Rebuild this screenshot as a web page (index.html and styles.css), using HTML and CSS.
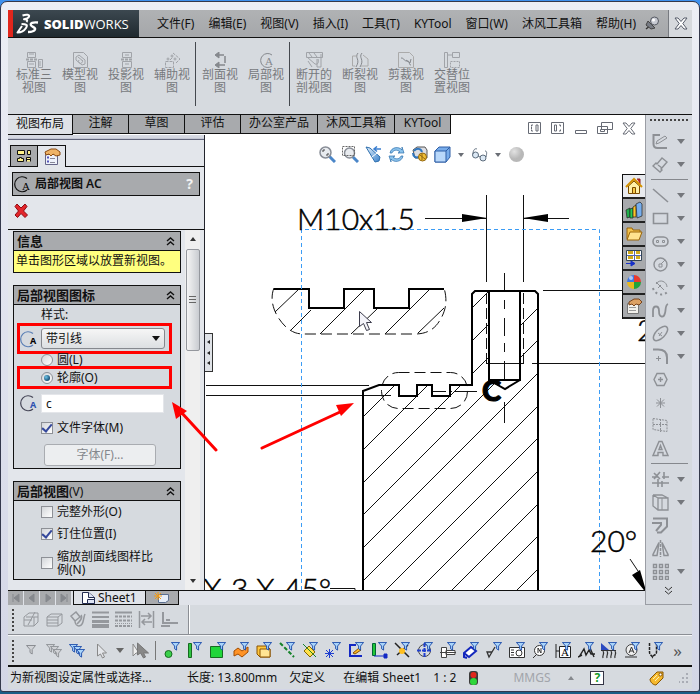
FILE: index.html
```html
<!DOCTYPE html>
<html lang="zh-CN">
<head>
<meta charset="utf-8">
<title>SOLIDWORKS</title>
<link rel="stylesheet" href="styles.css">
</head>
<body>
<svg class="defs" aria-hidden="true">
  <defs>
    <symbol id="funnel" viewBox="0 0 10 10"><path d="M.5.5h9L6.200 4.500V9L4 7.500V4.500z"/></symbol>
    <symbol id="chev" viewBox="0 0 9 9"><path d="M1 4l3.500-3L8 4M1 8l3.500-3L8 8" fill="none" stroke="#111" stroke-width="1.400"/></symbol>
    <symbol id="detail" viewBox="0 0 18 18"><path d="M13 3.500A7.500 7.500 0 1 0 13 15" fill="none" stroke="currentColor" stroke-width="1.200"/></symbol>
    <linearGradient id="steel" x1="0" y1="0" x2="1" y2="1"><stop offset="0" stop-color="#e6f2fc"/><stop offset="1" stop-color="#3b82cc"/></linearGradient>
    <radialGradient id="ball" cx=".35" cy=".3"><stop offset="0" stop-color="#e2e2e2"/><stop offset="1" stop-color="#b8b8b8"/></radialGradient>
  </defs>
</svg>

<div class="window">
  <header class="menubar">
    <div class="brand">
      <svg width="24" height="22" viewBox="0 0 24 22" fill="none" stroke="#fff" stroke-linejoin="round"><path d="M6.500 2.500c4-1.500 7.500-1 6.500 1.200-.6 1.500-3 2.300-5 2.500 3 0 4 1 2.500 2.800" stroke-width="2"/><path d="M5.500 11c5 0 6.500 1 4.500 4-1.600 2.500-5 4.500-8.500 4.500L6 13" stroke-width="2"/><path d="M22 9.500c-5.500-.5-8 .5-7 2.800.8 1.600 5 2 4 4.200-1 2-4 2.500-7 2.500" stroke-width="2.400"/></svg>
      <span class="brand-name"><b>SOLID</b>WORKS</span>
    </div>
    <nav class="menus">
      <button>文件(F)</button><button>编辑(E)</button><button>视图(V)</button><button>插入(I)</button><button>工具(T)</button><button>KYTool</button><button>窗口(W)</button><button>沐风工具箱</button><button>帮助(H)</button>
    </nav>
    <button class="pin" aria-label="固定菜单"><svg width="15" height="15" viewBox="0 0 15 15"><path d="M1 13l5-4" stroke="#333" stroke-width="1.500"/><path d="M3 5l7 7-4 1-5-4z" fill="#777b84" stroke="#444"/><circle cx="9.500" cy="5" r="4" fill="#c7cad2" stroke="#555962"/><circle cx="8.500" cy="4" r="1.500" fill="#fff"/></svg></button>
    <button class="close" aria-label="关闭"><svg width="14" height="13" viewBox="0 0 14 13"><path d="M1 1h3l3 3.500L10 1h3L8.800 6.500 13 12h-3L7 8.500 4 12H1l4.200-5.500z" fill="#fff" stroke="#555b68"/></svg></button>
  </header>

  <div class="ribbon">
    <button><svg class="ri" viewBox="0 0 17 16"><path d="M1.500.5h8v5h-8zM1.500 9.500h8v6h-8zM12.500 7.500h4v8h-4zM3 2h5M3 12h5M14 9v5"/><path d="M0 7.500h12" stroke-dasharray="3 1" stroke-width="2"/></svg><span>标准三<br>视图</span></button>
    <button><svg class="ri" viewBox="0 0 17 16"><path d="M1.500.5h10l4 4v11h-14z"/><path d="M4 5l3-2 6 5v4l-3 1-6-5zM6 5l5 4M7 8a2 2 0 1 0 3 0" /></svg><span>模型视<br>图</span></button>
    <button><svg class="ri" viewBox="0 0 17 16"><path d="M4.500.5h9v5h-9zM4.500 9.500h9v6h-9zM7 3h4M7 12h4"/><path d="M3 7.500h12" stroke-dasharray="3 1" stroke-width="2"/></svg><span>投影视<br>图</span></button>
    <button><svg class="ri" viewBox="0 0 17 16"><path d="M1.500 9.500h8v6h-8zM9 1l7 6-4 4M6 8l3-3" stroke-dasharray="3 1"/><circle cx="4" cy="7" r="1"/><circle cx="8" cy="4" r="1"/><circle cx="11" cy="7" r="1"/></svg><span>辅助视<br>图</span></button>
    <i></i>
    <button><svg class="ri dark" viewBox="0 0 17 16"><path d="M5 3h8v10H5" stroke-dasharray="7 2" stroke-width="1.500"/><path d="M7 0L3 3l4 3zM7 10l-4 3 4 3z" fill="#85888d"/></svg><span>剖面视<br>图</span></button>
    <button><svg class="ri dark" viewBox="0 0 17 16"><path d="M14 3A7 7 0 1 0 14 14"/><text x="7" y="13">A</text></svg><span>局部视<br>图</span></button>
    <i></i>
    <button><svg class="ri" viewBox="0 0 17 16"><path d="M.5.5h16v5H.5zM2 9l4 6M11 7v8h4V2M1 5l8 7c3 1 4-2 3-5M3 1l3 4M8 1l3 4"/></svg><span>断开的<br>剖视图</span></button>
    <button><svg class="ri dark" viewBox="0 0 17 16"><path d="M6 1c-4 5 3 6-2 14M10 1c-4 5 3 6-2 14"/><path d="M5 4H.5v10H3M11 3l5 4v7H9" stroke="#aaa"/></svg><span>断裂视<br>图</span></button>
    <button><svg class="ri" viewBox="0 0 17 16"><path d="M.5.5h11l4 4v11H.5z" stroke="#aaa"/><path d="M3 6c4 0 2 3 6 3s1 4 4 4M8 8l4 3 1-4" stroke="#85888d"/></svg><span>剪裁视<br>图</span></button>
    <button><svg class="ri" viewBox="0 0 17 16"><path d="M.5.5h3v15h-3zM8.500.5h7v5h-7zM3 3h5"/><path d="M6.500 9.500h9v6h-9z" stroke-dasharray="2 1"/></svg><span>交替位<br>置视图</span></button>
  </div>

  <main class="main">
    <section class="workspace">
      <div class="tabrow">
        <button class="tab active">视图布局</button><button class="tab">注解</button><button class="tab">草图</button><button class="tab">评估</button><button class="tab">办公室产品</button><button class="tab">沐风工具箱</button><button class="tab">KYTool</button>
        <div class="docctl">
          <svg viewBox="0 0 14 13"><path d="M.5.5h12v11H.5zM5 3H3.500v1.500M5 9H3.500V7.500M3.500 5v2M8 3h2v6H8z"/></svg>
          <svg viewBox="0 0 14 13"><path d="M.5.5h12v11H.5zM8 3h1.500v1.500M8 9h1.500V7.500M3.500 3h2v6h-2z"/></svg>
          <svg viewBox="0 0 14 13"><path d="M1.500 8.500h11v3h-11z"/></svg>
          <svg class="wide" viewBox="0 0 16 13"><path d="M4.500.5h11v7h-11zM.5 4.500h10v7H.5zM3.500 7.500h4v2h-4z"/></svg>
          <svg viewBox="0 0 14 13"><path d="M1 1h3l3 3.500L10 1h3L8.800 6.500 13 12h-3L7 8.500 4 12H1l4.200-5.500z"/></svg>
        </div>
      </div>

      <div class="split">
        <aside class="panel">
          <div class="grip"></div>
          <div class="ptabs">
            <button aria-label="特征树"><svg width="16" height="14" viewBox="0 0 16 14"><path d="M1.500 1.500h7v4h-7zM11.500 1.500h3v4h-3zM1.500 12.500V9.500h2v-1h2v1h2v3zM10.500 12.500v-4h4v4M10.500 10.500h4" fill="#fff28a" stroke="#111"/></svg></button>
            <button class="active" aria-label="属性"><svg width="18" height="18" viewBox="0 0 18 18"><path d="M2.500 6.500h12v10h-12z" fill="#eef2fb" stroke="#668"/><path d="M4 9.500h2M4 13.500h2" stroke="#55b" stroke-width="2"/><path d="M7 10.500h5M7 14.500h5" stroke="#889"/><path d="M2 4l6-3h5l4 3v3l-4 1-3-2-2 2-2-2-3 1z" fill="#efb366" stroke="#8a4b12"/></svg></button>
            <span></span>
          </div>
          <div class="ptitle"><svg width="18" height="18" viewBox="0 0 18 18"><use href="#detail"/><text x="8" y="15" class="serif">A</text></svg><h1>局部视图 AC</h1><b>?</b></div>
          <div class="actions"><button aria-label="取消"><svg width="14" height="15" viewBox="0 0 14 15"><path d="M3 1l4 4 4-4 2 2.500L9.500 8l4 4-2.500 2.500-4-4-3.500 4L1 12l3.500-4L1 3.500z" fill="#e3262b" stroke="#8e0a12"/></svg></button></div>
          <div class="pscroll">
            <form class="groups">
              <section class="group">
                <h2>信息<svg width="9" height="9"><use href="#chev"/></svg></h2>
                <p class="tip">单击图形区域以放置新视图。</p>
              </section>
              <section class="group">
                <h2>局部视图图标<svg width="9" height="9"><use href="#chev"/></svg></h2>
                <div class="gbody">
                  <label class="lab" for="style">样式:</label>
                  <div class="mark tall"><svg class="det" viewBox="0 0 18 18"><g class="blue"><use href="#detail"/></g><text x="10" y="14">A</text></svg><span class="pick"><select id="style"><option>带引线</option><option>无引线</option></select></span></div>
                  <label class="opt tight"><input type="radio" name="shape">圆(L)</label>
                  <div class="mark"><label class="opt"><input type="radio" name="shape" checked>轮廓(O)</label></div>
                  <div class="namerow"><svg class="det" viewBox="0 0 18 18"><use href="#detail"/><text x="10" y="14" fill="#2e52b0">A</text></svg><input type="text" value="c" aria-label="标号"></div>
                  <label class="opt"><input type="checkbox" checked>文件字体(M)</label>
                  <button type="button" class="font" disabled>字体(F)...</button>
                </div>
              </section>
              <section class="group">
                <h2><span>局部视图<em>(V)</em></span><svg width="9" height="9"><use href="#chev"/></svg></h2>
                <div class="gbody checks">
                  <label class="opt"><input type="checkbox">完整外形(O)</label>
                  <label class="opt"><input type="checkbox" checked>钉住位置(I)</label>
                  <label class="opt multi"><input type="checkbox"><span>缩放剖面线图样比例(N)</span></label>
                </div>
              </section>
            </form>
            <div class="vbar"><i class="up"></i><div class="thumb"><span></span></div><i class="down"></i></div>
          </div>
        </aside>

        <section class="canvas">
          <svg class="drawing" viewBox="205 135 440 455" preserveAspectRatio="xMidYMin slice">
            <defs>
              <clipPath id="solid"><path d="M363 391l16-6h20v11h18v-11h15v11h18v-11h22v-91l3-3h14v89l16 9 15-9v-89h15l3 3v297H363z"/></clipPath>
            </defs>
            <g class="thin">
              <path d="M486.500 195v87M523.500 195v87M425 218.500h62M523 218.500h46M543 290.500h102M532 363.500h113M206 385.500h163M206 395.500h185M330 588.500h25v2M630 559l8 12"/>
              <path d="M504.500 273v17m0 10v9m0 9v18m0 7v9m0 9v18m0 23v21M432 391.500h14m3 0h3m3 0h22"/>
              <path d="M486.500 293v70M523.500 293v70" stroke-dasharray="11 4"/>
              <path d="M486 363.500h38"/>
              <rect x="381.500" y="372.500" width="86" height="36" rx="17" stroke-dasharray="11 5"/>
              <path d="M274 288c-5 12 0 28 13 40 8 6 12 6 20 6h108c12 0 20-5 25-14 7-11 7-22 4-32" stroke-dasharray="11 5"/>
              <path d="M299 289l-24 23M311 310l-20 20M365 289l-45 45M377 309l-26 25M430 289l-45 45M444 308l-26 25"/>
              <g clip-path="url(#solid)"><path d="M330 450L560 220M330 483L560 253M330 516L560 286M330 548L560 318M330 581L560 351M330 614L560 384M330 646L560 416M330 679L560 449M330 712L560 482M330 744L560 514M330 777L560 547"/></g>
            </g>
            <g class="thick">
              <path d="M274 289h35v19h35v-19h30v19h35v-19h35"/>
              <path d="M363 590V391l16-6h20v11h18v-11h15v11h18v-11h22v-91l3-3h60l3 3v296"/>
              <path d="M489 291v89h31v-89M489 380l16 9 15-9"/>
            </g>
            <path d="M487 218l-25-4v8zM523 218l25-4v8zM647 594l-15-19 8-5z"/>
            <path class="sheet" d="M301.500 590V229.500h298V590"/>
            <g class="dim">
              <text x="297" y="230">M10x1.5</text><text x="590" y="552">20°</text><text x="637" y="341">2</text>
              <text x="203" y="600">X</text><text x="231" y="600">3</text><text x="256" y="600">X</text><text x="284" y="600">45°</text>
              <text x="482" y="401" class="heavy">C</text>
            </g>
            <path d="M359.500 311.500v15l4-3 3 7 3-1-3-7h5z" fill="#f4f4fa" stroke="#3c3c4c"/>
          </svg>

          <div class="viewbar">
            <svg viewBox="0 0 17 17"><path d="M10 10l6 6" stroke="#4a86c8" stroke-width="3"/><circle cx="6.500" cy="6.500" r="5.500" fill="#e8ebef" stroke="#888d96" stroke-width="1.500"/><path d="M4 6V4h2M9 7v2H7" fill="none" stroke="#444"/></svg>
            <svg viewBox="0 0 17 17"><path d="M10 10l6 6" stroke="#4a86c8" stroke-width="3"/><circle cx="7.500" cy="7" r="5" fill="#e8ebef" stroke="#888d96" stroke-width="1.500"/><path d="M.5.500h12v9H.5z" fill="none" stroke="#666" stroke-dasharray="2 1"/></svg>
            <svg viewBox="0 0 17 17"><path d="M1 1l4 1 10 9-1 4-4 1z" fill="url(#steel)" stroke="#2e6fae"/><path d="M16 3H9m3-2.500L9 3l3 2.500" fill="none" stroke="#3b7fd0" stroke-width="1.500"/><path d="M7 11l5-4" stroke="#fff"/></svg>
            <svg viewBox="0 0 17 17"><path d="M2 7c1-6 9-7 12-3V1l2 6h-6l2-1C9 3 5 4 4 7zM15 10c-1 6-9 7-12 3v3l-2-6h6l-2 1c3 3 7 2 8-1z" fill="#8cc3ec" stroke="#2e70ad" stroke-width=".7"/></svg>
            <svg viewBox="0 0 17 17"><path d="M2 4l4-3h8l2 3v8H4z" fill="#dcdde2" stroke="#555"/><path d="M3 5c2-3 7-3 8 1M2 7c0 4 3 5 6 4" fill="none" stroke="#2f75bd" stroke-width="2"/><circle cx="11.500" cy="11" r="4" fill="#f0bf35" stroke="#936710"/><path d="M9 9l5 4M11 7v7" stroke="#936710"/></svg>
            <svg viewBox="0 0 17 17"><path d="M1 5l4-4h11v10l-4 5H1z" fill="#78acea" stroke="#2f5ea6"/><path d="M1 5h11v11H1z" fill="#b9d8fa" stroke="#2f5ea6"/><path d="M12 5l4-4" stroke="#2f5ea6"/></svg>
            <i class="caret"></i>
            <svg viewBox="0 0 17 17" fill="#dbe8f4" stroke="#5d6c7c"><circle cx="4.500" cy="9" r="3"/><circle cx="12" cy="12" r="3"/><path d="M2 8c0-4 2-6 4-5M15 11c1-4 1-6-1-6M7 10l2 1" fill="none"/></svg>
            <i class="caret"></i>
            <svg viewBox="0 0 17 17"><circle cx="8.500" cy="8.500" r="7.500" fill="url(#ball)"/></svg>
          </div>
          <button class="collapse" aria-label="折叠面板"><i></i><i></i><i></i></button>
          <div class="tasks">
            <button class="active" aria-label="资源"><svg viewBox="0 0 18 18"><path d="M12 2h3v5" fill="#c22" stroke="#822"/><path d="M3.500 9v7.500h11V9L9 4z" fill="#fff1a8" stroke="#7a4a00"/><path d="M1 10l8-8 8 8" fill="none" stroke="#d39100" stroke-width="2"/><path d="M7.500 10.500h3v6h-3z" fill="#f7c948" stroke="#7a4a00"/></svg></button>
            <button aria-label="设计库"><svg viewBox="0 0 18 18" stroke="#222" stroke-width=".7"><path d="M1 9l4-2v9l-3 1z" fill="#21b04b"/><path d="M5 8l3-1v10H5z" fill="#26c954"/><path d="M8 6l3-2v12H8z" fill="#ffc426"/><path d="M11 3l4-2 2 2v12l-5 2z" fill="#77aeed"/></svg></button>
            <button aria-label="文件探索器"><svg viewBox="0 0 18 18"><path d="M2 14V3h5l1 2h7v3" fill="#f3c14b" stroke="#9a6508"/><path d="M2 15l3-8h12l-3 8z" fill="#ffe28e" stroke="#9a6508"/></svg></button>
            <button aria-label="视图调色板"><svg viewBox="0 0 18 18"><path d="M1.500 1.500h15v10h-15z" fill="#fff" stroke="#345"/><path d="M3 3.500h5M11 3.500h4M3 8.500h5M11 8.500h4" stroke="#cfaa18" stroke-width="3"/><path d="M9.500 2v9M2 6.500h14" stroke="#56a"/><path d="M1 14.500h6M6 12l4 2.500L6 17z" fill="#1730c8" stroke="#1730c8"/></svg></button>
            <button aria-label="外观"><svg viewBox="0 0 18 18"><path d="M9 9V2a7 7 0 0 0-7 7z" fill="#3f78e5"/><path d="M9 9h7a7 7 0 0 0-7-7z" fill="#e83b2e"/><path d="M9 9H2a7 7 0 0 0 7 7z" fill="#eab91d"/><path d="M9 9v7a7 7 0 0 0 7-7z" fill="#23a33c"/><circle cx="6" cy="5" r="2" fill="#fff" opacity=".6"/></svg></button>
            <button aria-label="自定义属性"><svg viewBox="0 0 18 18"><path d="M2.500 6.500h11v10h-11z" fill="#f2f0eb" stroke="#777"/><path d="M4 10.500h7M4 13.500h7" stroke="#999"/><path d="M4 5l5-3h5l3 3-3 3-3-1-2 2-2-2-3 1z" fill="#dda163" stroke="#79451d"/></svg></button>
          </div>
        </section>
      </div>

      <div class="sheets">
        <button class="nav" aria-label="首页"><svg viewBox="0 0 10 10"><path d="M2 1v8M8 1v8L3 5z"/></svg></button><button class="nav" aria-label="上一页"><svg viewBox="0 0 10 10"><path d="M7 1v8L2 5z"/></svg></button><button class="nav" aria-label="下一页"><svg viewBox="0 0 10 10"><path d="M3 1v8l5-4z"/></svg></button><button class="nav" aria-label="末页"><svg viewBox="0 0 10 10"><path d="M8 1v8M2 1v8l5-4z"/></svg></button>
        <button class="sheet-tab"><svg width="14" height="12" viewBox="0 0 14 12"><path d="M.5 11.500V.5h6l6 5v6z" fill="#fff" stroke="#222b50"/><path d="M5.500 7.500h7v4h-7zM6.500.5v5h6" fill="#dfe5f5" stroke="#222b50"/></svg>Sheet1</button>
        <button class="new-tab" aria-label="新建图纸"><svg width="16" height="12" viewBox="0 0 16 12"><path d="M4.500 2.500h10v6l-3 2h-7z" fill="#e6eef9" stroke="#5b6f90"/><path d="M4 0v8M0 4h8M1 1l6 6M7 1L1 7" stroke="#f39a12"/></svg></button>
      </div>
    </section>

    <aside class="tools">
      <div class="dots"></div>
      <button class="more"><svg viewBox="0 0 17 17"><path d="M8 2H1.500v9c0 3 1 4 4 4H15" stroke-width="2"/><path d="M5 8l8-5 2 2-8 5-3 1z"/></svg></button>
      <button class="more"><svg viewBox="0 0 17 17"><path d="M1 10l3-3 1 1 5-6 5 4-6 7 1 1-2 2zM6 9l4 3" stroke-width="1.400"/></svg></button>
      <hr>
      <button class="more"><svg viewBox="0 0 17 17"><path d="M1 2l15 13" stroke-width="1.600"/></svg></button>
      <button class="more"><svg viewBox="0 0 17 17"><path d="M1.500 3.500h14v10h-14z" stroke-width="1.600"/></svg></button>
      <button class="more"><svg viewBox="0 0 17 17"><rect x="1" y="4" width="15" height="9" rx="4.500" stroke-width="1.600"/><path d="M4.500 7.500h2v2h-2zM10.500 7.500h2v2h-2z"/></svg></button>
      <button class="more"><svg viewBox="0 0 17 17"><circle cx="8.500" cy="8.500" r="6.500" stroke-width="1.400"/><path d="M7 8h3v3H7zM9 8l4-4"/></svg></button>
      <button class="more"><svg viewBox="0 0 17 17"><path d="M4 5c4-6 11-2 11 3M4 3l8 8M9 6L6 9"/><path d="M1 9c2 8 12 8 15 3" stroke-dasharray="2 3" stroke-width="2"/></svg></button>
      <button class="more"><svg viewBox="0 0 17 17"><path d="M1 15V9c0-6 6-6 6 0 0 7 5 7 6 2 1-3 0-8 3-9" stroke-width="1.800"/></svg></button>
      <button class="more"><svg viewBox="0 0 17 17"><ellipse cx="8.500" cy="8.500" rx="9" ry="4.500" transform="rotate(-45 8.500 8.500)" stroke-width="1.500"/><path d="M6 8l4 3M10 7l-3 4"/></svg></button>
      <button class="more"><svg viewBox="0 0 17 17"><path d="M1 1.500h5c7 0 9 4 9 8V16" stroke-width="2"/><path d="M4 10.500h5M6.500 8v5"/></svg></button>
      <button><svg viewBox="0 0 17 17"><path d="M5 2.500h7l3 6-3 6H5l-3-6zM6 8.500h5M8.500 6v5" stroke-width="1.400"/></svg></button>
      <button><svg viewBox="0 0 17 17"><path d="M8.500 4v10M4 9h9M5 5.500l7 7M12 5.500l-7 7"/></svg></button>
      <button><svg viewBox="0 0 17 17"><path d="M1 1.500l14 2v11l-14-2zM1 7.500h15M8.500 2v13" stroke-dasharray="2 1"/></svg></button>
      <button><svg viewBox="0 0 17 17"><path d="M1 15.500h5v-3h5v3h5L10 1.500H7zM7 9.500h3L8.500 5.500z" stroke-width="1.400"/></svg></button>
      <hr>
      <button class="more"><svg viewBox="0 0 17 17"><path d="M0 6h6m4 0h7M0 12h17M12 1v7M10 10v6M6 8v8M2 2l6 6M8 1L2 8" stroke-width="1.600"/></svg></button>
      <button class="more"><svg viewBox="0 0 17 17"><path d="M1 1h9l6 3M1 1v11l5 4h10V4H6v12M1 1l5 3" stroke-width="1.300"/><path d="M10 4v12"/></svg></button>
      <button><svg viewBox="0 0 17 17"><path d="M0 6h9v2l-5 6M1 1.500h14v8l-6 6H5" stroke-width="2"/></svg></button>
      <button><svg viewBox="0 0 17 17"><path d="M1 15.500h4l2-13-6 12zM16 15.500h-4l-2-13 6 12z" stroke-width="1.500"/><path d="M8.500 0v17" stroke-dasharray="3 1" stroke-width="1.500"/></svg></button>
      <button class="more"><svg viewBox="0 0 17 17"><path d="M1.500 1.500h3v3h-3zM7.500 1.500h3v3h-3zM13.500 1.500h3v3h-3zM1.500 7.500h3v3h-3zM7.500 7.500h3v3h-3zM13.500 7.500h3v3h-3zM1.500 13.500h3v3h-3zM7.500 13.500h3v3h-3zM13.500 13.500h3v3h-3z" stroke-width="1.400"/></svg></button>
      <button class="expand"><svg viewBox="0 0 9 9"><path d="M1 1l3.500 3L8 1M1 5l3.500 3L8 5" stroke="#333"/></svg></button>
    </aside>
  </main>

  <div class="bar lines">
    <div class="vdots"></div>
    <svg viewBox="0 0 17 17"><path d="M1 6l5-4h9v9l-4 4H1zM5 14L12 1M1 9h8M3 6h12M11 6v9"/></svg>
    <svg viewBox="0 0 17 17"><path d="M1 6l4-3h11v9l-4 3H1zM1 6h11v9M12 6l4-3M1 9h11M1 12h11"/></svg>
    <svg viewBox="0 0 17 17"><path d="M2 5l5-4 4 5-5 4-4-5zM6 10c0 3 2 5 4 5 5 0 4-8 6-12M12 4c2 3-1 6-4 9" stroke-width="1.500"/></svg>
    <svg viewBox="0 0 17 17"><path d="M0 1.500h17M0 6h17" stroke-width="2"/><path d="M0 10.500h17" stroke-width="3"/><path d="M0 15h17" stroke-width="4"/></svg>
    <svg viewBox="0 0 17 17"><path d="M0 1.500h17" stroke-width="2"/><path d="M0 5.500h17M0 9.500h17M0 15h17" stroke-width="2" stroke-dasharray="3 1"/><path d="M0 12.500h17" stroke-dasharray="1 1"/></svg>
    <svg viewBox="0 0 17 17"><path d="M1.500 0v17M15.500 0v17M3 5h10M10 2l3 3-3 3M14 11H4M7 8l-3 3 3 3" stroke-width="1.500"/></svg>
    <svg viewBox="0 0 17 17"><path d="M2 1v11h15M0 15h9M5 9h4" stroke-width="2"/></svg>
    <div class="sep"></div>
  </div>

  <div class="bar filters">
    <div class="vdots"></div>
    <svg viewBox="0 0 17 17"><use href="#funnel" x="3" y="3" width="10" height="10" class="fg"/></svg>
    <svg viewBox="0 0 17 17" class="fg"><use href="#funnel" x="0" y="2" width="9" height="9"/><use href="#funnel" x="4" y="4" width="9" height="9"/><use href="#funnel" x="7" y="7" width="9" height="9"/></svg>
    <svg viewBox="0 0 17 17" class="fb"><use href="#funnel" x="0" y="2" width="9" height="9"/><use href="#funnel" x="4" y="4" width="9" height="9"/><use href="#funnel" x="7" y="7" width="9" height="9"/></svg>
    <svg viewBox="0 0 17 17"><path d="M5.500 2v12l3-2 2 4 2-1-2-4h4z" fill="#e4e6ea" stroke="#888"/></svg>
    <i class="caret"></i>
    <svg viewBox="0 0 17 17"><path d="M1 2v12l3-3h3z" fill="#eee" stroke="#888"/><path d="M5.500 1v12l3-2 3 5 2-1-2-4h5z" fill="#888" stroke="#777"/></svg>
    <div class="rule"></div>
    <svg viewBox="0 0 17 17"><circle cx="4.500" cy="12" r="3.500" fill="#3ad04a" stroke="#166b20"/><use href="#funnel" x="7" width="9" height="9" class="fb"/></svg>
    <svg viewBox="0 0 17 17"><path d="M1.500 1.500h3v14h-3z" fill="#2fc442" stroke="#166b20"/><use href="#funnel" x="6" width="9" height="9" class="fb"/></svg>
    <svg viewBox="0 0 17 17"><path d="M.5 4.500h12v11H.5z" fill="#20d63a" stroke="#166b20"/><use href="#funnel" x="7" width="9" height="9" class="fb"/></svg>
    <svg viewBox="0 0 17 17"><path d="M1 9l4-3 4 3 6-4v5l-6 5-4-3-4 2z" fill="#ff9326" stroke="#a34d00"/><use href="#funnel" x="7" width="9" height="9" class="fb"/></svg>
    <svg viewBox="0 0 17 17"><path d="M1 4h10l3 3v8H4l-3-3z" fill="#ffc73c" stroke="#8a5300"/><path d="M4 7h10v8H4z" fill="#ffe493" stroke="#8a5300"/><use href="#funnel" x="7" width="9" height="9" class="fb"/></svg>
    <svg viewBox="0 0 17 17"><path d="M1 1l14 14" stroke="#16832a" stroke-width="2" stroke-dasharray="4 2"/><use href="#funnel" x="7" width="9" height="9" class="fb"/></svg>
    <svg viewBox="0 0 17 17"><path d="M2 9l5-5 6 6-5 5z" fill="#ffe14a" stroke="#846600"/><path d="M1 2l13 13" stroke="#16832a"/><use href="#funnel" x="7" width="9" height="9" class="fb"/></svg>
    <svg viewBox="0 0 17 17"><path d="M4.500 7v9M0 11.500h9M1 8l7 7M8 8l-7 7" stroke="#1f3fd0"/><use href="#funnel" x="7" width="9" height="9" class="fb"/></svg>
    <svg viewBox="0 0 17 17"><path d="M8 3H2v11h12" fill="none" stroke="#1328c4" stroke-width="2"/><path d="M5 11l6-5 2 2-6 4z" fill="#ffbd25" stroke="#864c00"/><use href="#funnel" x="7" width="9" height="9" class="fb"/></svg>
    <svg viewBox="0 0 17 17"><path d="M1.500 1.500h3v12h-3z" fill="#20c638" stroke="#063"/><path d="M3 14h12M13 12h3v4h-3z" stroke="#1328c4" fill="#1328c4"/><use href="#funnel" x="7" width="9" height="9" class="fb"/></svg>
    <svg viewBox="0 0 17 17"><path d="M1 1l14 14M14 3L3 13" stroke="#222" stroke-width="1.500"/><circle cx="8" cy="9" r="3" fill="#ffbf1e"/><use href="#funnel" x="7" width="9" height="9" class="fb"/></svg>
    <svg viewBox="0 0 17 17"><circle cx="7.500" cy="8.500" r="6" fill="none" stroke="#444"/><path d="M0 8.500h15M7.500 1v15" stroke="#1f3fd0" stroke-width="2" stroke-dasharray="4 1"/><use href="#funnel" x="7" width="9" height="9" class="fb"/></svg>
    <svg viewBox="0 0 17 17"><path d="M1.500 5.500h5v10h-5zM6 8.500h9v4H6zM0 10.500h16" fill="#fff" stroke="#444"/><use href="#funnel" x="7" width="9" height="9" class="fb"/></svg>
    <svg viewBox="0 0 17 17"><path d="M1 11l7-6 5 4-7 6zM1 11v4l3 1" fill="#fff" stroke="#1327bd" stroke-width="2"/><use href="#funnel" x="7" width="9" height="9" class="fb"/></svg>
    <svg viewBox="0 0 17 17"><path d="M1 10h5l-3 5zL3 15l6-10" fill="none" stroke="#333" stroke-width="1.300"/><use href="#funnel" x="7" width="9" height="9" class="fb"/></svg>
    <svg viewBox="0 0 17 17"><path d="M.5 5.500h15v10H.5zM2 8h3M2 10.500h3M2 13h3" fill="#fff" stroke="#333"/><circle cx="10" cy="11" r="3" fill="none" stroke="#333"/><use href="#funnel" x="7" width="9" height="9" class="fb"/></svg>
    <svg viewBox="0 0 17 17"><circle cx="7.500" cy="8.500" r="5" fill="#fff" stroke="#333"/><path d="M1 16l3-3M6 11V6l3 5V6" fill="none" stroke="#333"/><use href="#funnel" x="7" width="9" height="9" class="fb"/></svg>
    <svg viewBox="0 0 17 17"><path d="M1 2v14M1 9h3M4.500 4.500h11v11h-11z" fill="#fff" stroke="#222"/><text x="6" y="14" class="serif">A</text><use href="#funnel" x="7" width="9" height="9" class="fb"/></svg>
    <svg viewBox="0 0 17 17"><path d="M1 15L6 7l2 6 3-5 2 4h4M0 15l4-2M12 6l4 9" fill="none" stroke="#222" stroke-width="1.400"/><use href="#funnel" x="7" width="9" height="9" class="fb"/></svg>
    <svg viewBox="0 0 17 17"><path d="M0 8V1l8 7z" fill="#2b49c0"/><path d="M0 8.500h15M2 9c2 3-1 4 0 7M6 9c2 3-1 4 0 7M10 9c2 3-1 4 0 7M14 9c2 3-1 4 0 7" fill="none" stroke="#333" stroke-width="1.200"/><use href="#funnel" x="7" width="9" height="9" class="fb"/></svg>
    <svg viewBox="0 0 17 17"><circle cx="7.500" cy="8" r="5.500" fill="#eee" stroke="#444"/><path d="M5 11l2.500-6 2.500 6M6 9h3M1 15h12" fill="none" stroke="#333"/><use href="#funnel" x="7" width="9" height="9" class="fb"/></svg>
    <svg viewBox="0 0 17 17"><path d="M2.500 1v9c0 3 2 3 3 5 1-2 4-2 4-5V1" fill="none" stroke="#222" stroke-width="1.500" stroke-dasharray="3 1"/><use href="#funnel" x="7" width="9" height="9" class="fb"/></svg>
    <span class="overflow">»</span>
  </div>

  <footer class="status">
    <span class="hint">为新视图设定属性或选择...</span><span class="len">长度: 13.800mm</span><span>欠定义</span><span class="edit">在编辑 Sheet1</span><span>1 : 2</span>
    <svg class="light" width="11" height="15" viewBox="0 0 11 15"><rect x="1" width="9" height="14" rx="3" fill="#3b3b3b"/><circle cx="5.500" cy="4" r="3" fill="#e0281c"/><circle cx="5.500" cy="10.500" r="3.500" fill="#2fd63b"/></svg>
    <span class="units">MMGS</span><i class="upcaret"></i>
    <button class="help">?</button>
    <svg class="tag" width="16" height="16" viewBox="0 0 16 16"><path d="M1 9l7-7h6v6l-7 7c-3 0-6-3-6-6z" fill="#f5b92e" stroke="#8a5600"/><circle cx="11.500" cy="4.500" r="1.500" fill="#fff" stroke="#8a5600"/><path d="M4 9l4-4M6 11l4-4" stroke="#fff0b0"/></svg>
    <svg class="size" width="10" height="10" viewBox="0 0 10 10"><path d="M8 0v2M8 4v2M4 4v2M8 8v2M4 8v2M0 8v2" stroke="#a9adb5" stroke-width="2"/></svg>
  </footer>

  <svg class="arrows" viewBox="0 0 200 60" width="200" height="60" aria-hidden="true"><path d="M53 52L18 14M99 50l78-36" stroke="#f00" stroke-width="3" stroke-linecap="round" fill="none"/><path d="M9 4l15 9-11 8zM191 5l-13 13-5-11z" fill="#f00"/></svg>
</div>
</body>
</html>
```

FILE: styles.css
```css
* { box-sizing: border-box; }
body {
  margin: 0;
  padding: 1px 0 2px;
  min-height: 100vh;
  display: flex;
  background: linear-gradient(#3d90ee 0, #3d90ee 40px, #1b5d86 90%);
  font: 12px/14px "Noto Sans", "Noto Sans CJK SC", sans-serif;
  color: #111;
}
button, input, select { font: inherit; color: inherit; margin: 0; padding: 0; }
button { background: none; border: 0; white-space: nowrap; }
svg { flex: none; }
.defs { position: absolute; width: 0; height: 0; }
.serif { font: 11px "Liberation Serif", serif; }

.window {
  position: relative;
  flex: 1;
  min-width: 0;
  display: flex;
  flex-direction: column;
  padding: 8px 7px 2px;
  border: 1px solid #34384c;
  border-radius: 7px 7px 3px 3px;
  background: linear-gradient(#eceef5, #d3d6e6);
}

/* menu bar */
.menubar {
  display: flex;
  height: 28px;
  background: linear-gradient(#b0b2b4, #a5a7aa);
  border-bottom: 1px solid #111;
}
.brand {
  display: flex;
  flex: none;
  align-items: center;
  gap: 4px;
  width: 131px;
  padding-left: 3px;
  border-left: 5px solid #e1261c;
  background: linear-gradient(#3c4850, #1f292f);
  color: #fff;
}
.brand-name { font: 13px/14px "Open Sans", sans-serif; }
.brand-name b { font-weight: 800; }
.menus { display: flex; flex: 1; gap: 14px; padding-left: 18px; min-width: 0; }
.pin { width: 26px; margin-right: 3px; }
.pin svg, .close svg { display: block; margin: auto; }
.close { width: 24px; background: #d6d9dd; border-left: 1px solid #777a80; }

/* ribbon */
.ribbon {
  display: flex;
  height: 77px;
  padding: 0 3px;
  background: #d6dadf;
  border-bottom: 1px solid #111;
}
.ribbon button {
  width: 46px;
  padding-top: 14px;
  display: flex;
  flex-direction: column;
  align-items: center;
  color: #77797d;
  line-height: 13px;
}
.ribbon i { width: 1px; margin: 4px 1px 8px 0; background: #44484e; }
.ri { width: 17px; height: 16px; fill: none; stroke: #a0a3a8; }
.ri.dark { stroke: #85888d; }
.ri text { font: 11px "Liberation Serif", serif; fill: #85888d; stroke: none; }

/* work area */
.main { display: flex; flex: 1; }
.workspace { flex: 1; min-width: 0; display: flex; flex-direction: column; }
.tabrow { display: flex; height: 20px; background: #fff; }
.tab {
  flex: none;
  min-width: 56px;
  height: 19px;
  padding: 0 8px 2px;
  background: #a8aaad;
  border-right: 1px solid #111;
  border-bottom: 1px solid #111;
}
.tab.active { background: #dfe2e7; height: 20px; }
.docctl { margin-left: auto; display: flex; gap: 9px; padding: 7px 9px 0 0; }
.docctl svg { width: 14px; height: 13px; fill: #fff; stroke: #666a74; }
.docctl .wide { width: 16px; }

.split { display: flex; flex: 1; }
.panel {
  width: 197px;
  display: flex;
  flex-direction: column;
  background: #e3e6eb;
  border-right: 1px solid #22242c;
}
.grip { height: 5px; background: #c4c7d4; border-top: 3px solid #d6d9e2; border-bottom: 1px solid #62667c; }
.ptabs { display: flex; height: 27px; padding-top: 5px; }
.ptabs::before { content: ""; width: 2px; border-bottom: 1px solid #111; }
.ptabs span { flex: 1; border-bottom: 1px solid #111; }
.ptabs button { width: 28px; border: 1px solid #111; background: #a8aaad; }
.ptabs .active { background: #e3e6eb; border-bottom: 0; border-left: 0; }
.ptabs svg { display: block; margin: auto; }
.ptitle {
  display: flex;
  align-items: center;
  gap: 3px;
  height: 24px;
  margin: 5px 4px 0;
  padding: 0 6px 0 1px;
  background: #a8aaad;
  border: 1px solid #111;
}
.ptitle h1 { flex: 1; margin: 0; font-size: 12px; font-weight: 600; }
.ptitle b { color: #f2f2f2; font-size: 14px; }
.actions { height: 34px; padding: 7px 0 0 6px; border-bottom: 1px solid #111; }
.pscroll { display: flex; flex: 1; }
.groups { flex: 1; min-width: 0; padding: 1px 4px 6px 5px; display: flex; flex-direction: column; gap: 12px; }
.group { border: 1px solid #111; background: #d6dadf; }
.group h2 {
  display: flex;
  align-items: center;
  justify-content: space-between;
  height: 19px;
  margin: 0;
  padding: 0 5px 0 3px;
  font-size: 13px;
  font-weight: 600;
  background: #a8aaad;
  border-bottom: 1px solid #111;
}
.group em { font-style: normal; font-weight: 400; font-size: 12px; }
.tip { margin: 0; padding: 3px 2px 4px; background: #ffff7f; white-space: nowrap; }
.gbody { display: flex; flex-direction: column; padding: 0 8px 2px 3px; }
.lab { height: 18px; line-height: 20px; padding-left: 24px; }
.mark { border: 3px solid #f00; height: 23px; display: flex; align-items: center; }
.mark.tall { height: 31px; }
.mark .opt { padding-left: 21px; }
.det { width: 18px; height: 18px; margin-right: 3px; color: #445; }
.det text { font: bold 9px "Noto Sans", sans-serif; }
.blue { color: #5a7fb5; }
.pick { position: relative; flex: 1; margin-right: 4px; }
.pick::after {
  content: "";
  position: absolute;
  right: 5px;
  top: 8px;
  border: 4px solid transparent;
  border-top: 5px solid #111;
  border-bottom: 0;
}
select {
  display: block;
  width: 100%;
  height: 21px;
  padding-left: 4px;
  appearance: none;
  background: linear-gradient(#f6f6f6, #dcdfe2);
  border: 1px solid #85888e;
  border-radius: 3px;
}
.opt { display: flex; align-items: center; gap: 4px; height: 20px; padding-left: 24px; }
.opt.tight { height: 12px; }
.opt input {
  appearance: none;
  flex: none;
  width: 12px;
  height: 12px;
  border: 1px solid #8d9096;
  background: linear-gradient(135deg, #d3d6da, #fff);
  display: grid;
  place-content: center;
}
.opt input[type="radio"] { border-radius: 50%; }
.opt input[type="radio"]:checked::before {
  content: "";
  width: 6px;
  height: 6px;
  border-radius: 50%;
  background: radial-gradient(circle at 35% 35%, #6fc5e8, #0c3f66 80%);
}
.opt input[type="checkbox"]:checked::before {
  content: "";
  width: 4px;
  height: 8px;
  margin-bottom: 2px;
  border: solid #34489c;
  border-width: 0 2px 2px 0;
  transform: rotate(40deg);
}
.namerow { display: flex; align-items: center; height: 20px; margin: 4px 0 5px; padding-left: 3px; }
.namerow input { width: 123px; height: 19px; padding: 0 4px; border: 1px solid #e4e6ea; background: #fff; }
.font {
  height: 22px;
  margin: 6px 16px 0 27px;
  border: 1px solid #a9acb1;
  border-radius: 3px;
  background: #eceef0;
  color: #85888d;
}
.checks { gap: 2px; padding: 1px 0 3px 3px; }
.opt.multi { height: auto; line-height: 13px; padding-top: 4px; padding-right: 20px; }
.vbar { width: 15px; margin-right: 4px; background: #efefef; display: flex; flex-direction: column; align-items: center; }
.vbar i { border: 3px solid transparent; }
.vbar .up { margin: 4px 0 8px; border-bottom: 4px solid #333; }
.vbar .down { margin: auto 0 4px; border-top: 4px solid #333; }
.thumb { width: 14px; height: 102px; border: 1px solid #94979d; border-radius: 2px; background: linear-gradient(90deg, #f4f4f4, #c9ccd1); display: grid; place-content: center; }
.thumb span { width: 7px; height: 8px; background: repeating-linear-gradient(#666 0 1px, transparent 1px 3px); }

/* drawing */
.canvas { position: relative; flex: 1; min-width: 0; background: #fff; overflow: hidden; }
.drawing { display: block; width: 100%; height: 100%; }
.thin { fill: none; stroke: #111; }
.thick { fill: none; stroke: #000; stroke-width: 2; }
.sheet { fill: none; stroke: #3b9cf5; stroke-dasharray: 4 3; }
.dim text { font: 300 30px Lato, sans-serif; stroke: #000; stroke-width: .5; }
.dim .heavy { font-size: 29px; font-weight: 900; stroke-width: 1; }
.viewbar { position: absolute; top: 11px; left: 114px; display: flex; align-items: center; gap: 6px; }
.viewbar svg { width: 17px; height: 17px; }
.caret { width: 6px; border: 3px solid transparent; border-top: 4px solid #6a6e75; border-bottom: 0; }
.viewbar .caret { margin: 0 1px; }
.collapse {
  position: absolute;
  left: 0;
  top: 198px;
  width: 8px;
  height: 39px;
  border: 1px solid #333;
  border-left: 0;
  background: #dfe2e7;
  display: flex;
  flex-direction: column;
  align-items: center;
  justify-content: space-evenly;
}
.collapse i { border: 2px solid transparent; border-right: 3px solid #222; border-left: 0; }
.tasks { position: absolute; right: 0; top: 39px; width: 23px; border: 1px solid #111; border-width: 1px 0 0 1px; }
.tasks button { display: block; width: 22px; height: 24px; background: #a8aaad; border-bottom: 2px solid #222; }
.tasks .active { background: #e8eaee; }
.tasks svg { display: block; width: 18px; height: 18px; margin: auto; }

/* sheet tabs */
.sheets { display: flex; height: 15px; background: #e0e3e9; border-top: 1px solid #111; }
.nav { width: 15px; margin-right: 1px; background: #a8aaad; }
.nav svg { display: block; width: 10px; height: 10px; margin: auto; fill: #85888d; stroke: #85888d; }
.sheet-tab { display: flex; align-items: center; gap: 2px; margin-left: 1px; padding: 0 8px; border: 1px solid #111; border-top: 0; }
.new-tab { width: 33px; background: #a8aaad; border: solid #111; border-width: 0 1px 1px 0; }
.new-tab svg { display: block; margin: auto; }

/* sketch tools */
.tools { width: 47px; padding-top: 4px; background: #d5d9df; border: solid #9a9da4; border-width: 0 0 1px 1px; }
.dots { height: 3px; margin: 0 4px 8px; background: repeating-linear-gradient(90deg, #444 0 2px, transparent 2px 4px); border-bottom: 1px solid #d5d9df; }
.tools button { display: flex; align-items: center; width: 100%; height: 23px; padding-left: 6px; }
.tools svg { width: 17px; height: 17px; fill: none; stroke: #8d9095; }
.tools .more::after { content: ""; margin-left: 8px; border: 4px solid transparent; border-top: 5px solid #74777c; border-bottom: 0; }
.tools hr { height: 1px; margin: 3px 4px 4px 5px; border: 0; background: #85888d; }
.tools .expand { height: 14px; padding-left: 18px; }
.tools .expand svg { width: 9px; height: 9px; }

/* bottom toolbars */
.bar { display: flex; align-items: center; height: 30px; background: #d6dadf; border-bottom: 1px solid #8b8e94; }
.bar > svg { width: 17px; height: 17px; margin-right: 6px; }
.vdots { width: 2px; height: 22px; margin: 0 9px 0 4px; background: repeating-linear-gradient(#444 0 2px, transparent 2px 4px); }
.lines > svg { fill: none; stroke: #95989d; }
.sep { align-self: stretch; width: 2px; margin-left: 4px; border-left: 1px solid #8b8e94; background: #fff; }
.filters { height: 32px; border-top: 1px solid #f4f5f7; border-bottom: 2px solid #111; }
.fg { fill: #d0d2d6; stroke: #8a8d92; }
.fb { fill: #a9d4fa; stroke: #1747a8; }
.filters .caret { margin: 0 8px 0 1px; border-width: 4px; width: 8px; border-bottom: 0; border-top: 5px solid #666; }
.rule { width: 1px; height: 19px; margin: 0 8px 0 0; background: #777; }
.overflow { margin-left: auto; padding-right: 10px; font-size: 17px; color: #555; }

/* status bar */
.status { display: flex; align-items: center; height: 22px; padding: 0 3px 0 2px; background: #d6dadf; white-space: nowrap; }
.status > * { flex: none; }
.status > span { margin-right: 12px; }
.status .hint { width: 165px; }
.status .edit { margin-left: 6px; }
.light { margin-right: 34px; }
.status .units { color: #a2a5ab; }
.upcaret { margin: 0 16px 0 6px; border: 3px solid transparent; border-top: 0; border-bottom: 4px solid #85888d; }
.help { width: 14px; height: 14px; line-height: 12px; border: 1px solid #334; background: #fff; color: #139a2b; font-weight: bold; }
.tag { margin-left: auto; margin-right: 14px; }

.arrows { position: absolute; left: 162px; top: 396px; pointer-events: none; }
```
